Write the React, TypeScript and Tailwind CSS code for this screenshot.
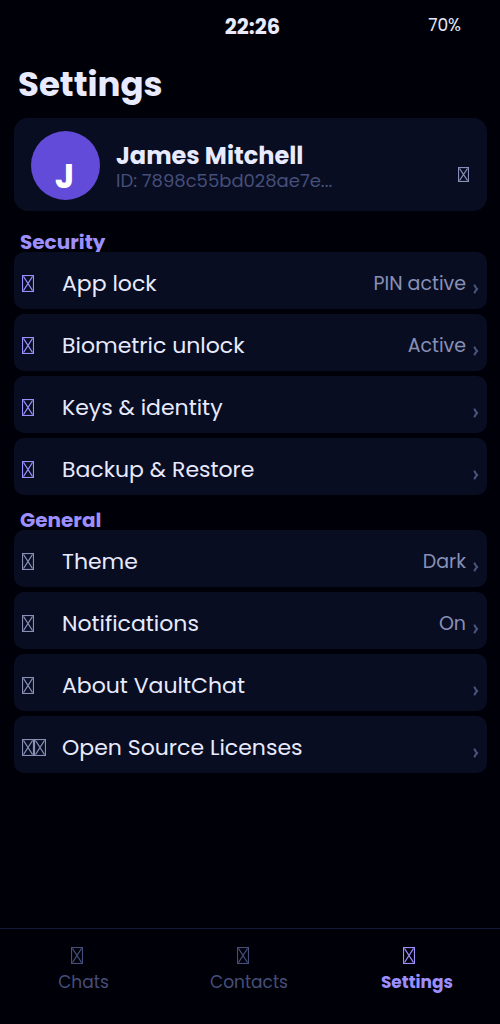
import React from "react";

type GlyphProps = { className: string; count?: number; w?: number; h?: number };

function Glyph({ className, count = 1, w = 12, h = 17 }: GlyphProps) {
  return (
    <span className={"flex " + className}>
      {Array.from({ length: count }, (_, i) => (
        <svg key={i} width={w} height={h} viewBox={`0 0 ${w} ${h}`} fill="none" stroke="currentColor" className="block shrink-0">
          <rect x="0.5" y="0.5" width={w - 1} height={h - 1} strokeWidth="1.2" />
          <path d={`M1.5 1.5L${w - 1.5} ${h - 1.5}M${w - 1.5} 1.5L1.5 ${h - 1.5}`} strokeWidth="1.3" />
        </svg>
      ))}
    </span>
  );
}

function Chevron() {
  return (
    <svg width="6" height="10" viewBox="0 0 6 10" fill="none" stroke="#4c5480" className="mt-[16px] block shrink-0">
      <path d="M1.2 0.6Q2.4 3.2 4.1 5Q2.4 6.8 1.2 9.2" strokeWidth="2" />
    </svg>
  );
}

type Item = { label: string; value?: string; icons?: number };

const security: Item[] = [
  { label: "App lock", value: "PIN active" },
  { label: "Biometric unlock", value: "Active" },
  { label: "Keys & identity" },
  { label: "Backup & Restore" },
];

const general: Item[] = [
  { label: "Theme", value: "Dark" },
  { label: "Notifications", value: "On" },
  { label: "About VaultChat" },
  { label: "Open Source Licenses", icons: 2 },
];

function Row({ item, color }: { item: Item; color: string }) {
  return (
    <li className="flex h-[57px] items-center rounded-[10px] bg-[#080d21] pr-2 pl-2">
      <div className="w-10 shrink-0 pt-[6px]">
        <Glyph className={color} count={item.icons} />
      </div>
      <span className="grow pt-[7px] text-[22px] leading-7 whitespace-nowrap text-[#e8eaff]">{item.label}</span>
      {item.value && (
        <span className="mr-[7px] pt-[7px] text-[19px] leading-7 whitespace-nowrap text-[#8890b8]">{item.value}</span>
      )}
      <Chevron />
    </li>
  );
}

function Section({ title, items, color }: { title: string; items: Item[]; color: string }) {
  return (
    <section>
      <h2 className="flex h-[35px] items-end pl-[6px] text-[20px] leading-[20px] font-bold text-[#9d8fff]">{title}</h2>
      <ul className="flex flex-col gap-[5px]">
        {items.map((item) => (
          <Row key={item.label} item={item} color={color} />
        ))}
      </ul>
    </section>
  );
}

export default function App() {
  return (
    <div className="flex h-[1024px] w-[500px] flex-col overflow-hidden bg-[#000008] font-[Poppins,Inter,sans-serif]">
      <header className="grid h-[52px] grid-cols-[1fr_auto_1fr] text-[#e8eaff]">
        <span />
        <span className="pt-[15px] pl-[5px] text-[21px] leading-6 font-bold">22:26</span>
        <span className="pt-[13px] pr-[39px] text-right text-[17px] leading-6">70%</span>
      </header>
      <h1 className="h-[66px] pt-[12px] pl-[18px] text-[34px] leading-10 font-bold text-[#e8eaff]">Settings</h1>
      <main className="flex grow flex-col pr-[13px] pl-[14px]">
        <div className="mb-[6px] flex h-[93px] shrink-0 items-center rounded-[14px] bg-[#080d21] pl-[17px]">
          <div className="mt-[2px] flex size-[69px] shrink-0 justify-center rounded-full bg-[#614bd8] pt-[25px] pr-[2px] text-[34px] leading-10 font-bold text-white">J</div>
          <div className="ml-4 grow pt-[6px]">
            <p className="text-[24px] leading-[26px] font-bold whitespace-nowrap text-[#e8eaff]">James Mitchell</p>
            <p className="text-[18px] leading-6 whitespace-nowrap text-[#464f7a]">ID: 7898c55bd028ae7e...</p>
          </div>
          <Glyph className="mt-[19px] mr-[18px] text-[#8890b8]" w={11} h={15} />
        </div>
        <Section title="Security" items={security} color="text-[#9d8fff]" />
        <Section title="General" items={general} color="text-[#8890b8]" />
      </main>
      <nav className="flex h-24 shrink-0 border-t border-[#141a36] text-[17px] leading-6 text-[#464f7a]">
        <a className="flex w-[166px] flex-col items-center pt-[18px]">
          <Glyph className="-ml-[12px]" />
          <span className="mt-[6px] pl-px">Chats</span>
        </a>
        <a className="flex w-[166px] flex-col items-center pt-[18px]">
          <Glyph className="-ml-[12px]" />
          <span className="mt-[6px]">Contacts</span>
        </a>
        <a className="flex w-[168px] flex-col items-center pt-[18px] font-bold text-[#9d8fff]">
          <Glyph className="-ml-[14px]" />
          <span className="mt-[6px] pl-[2px]">Settings</span>
        </a>
      </nav>
    </div>
  );
}
